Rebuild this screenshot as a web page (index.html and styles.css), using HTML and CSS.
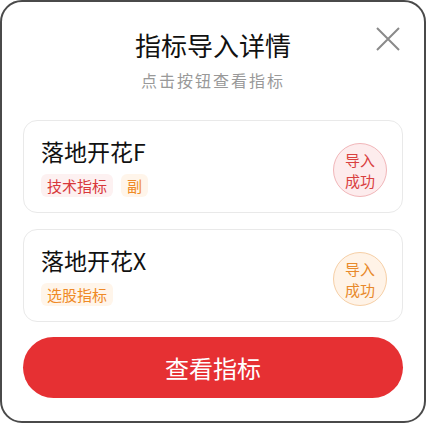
FILE: index.html
```html
<!DOCTYPE html>
<html lang="zh-CN">
<head>
    <meta charset="UTF-8">
    <meta name="viewport" content="width=device-width, initial-scale=1.0">
    <title>指标导入详情</title>
    <link rel="stylesheet" href="styles.css">
</head>
<body>
    <div class="sheet">
        <!-- 标题 -->
        <div class="header">
            <h1 class="title">指标导入详情</h1>
            <p class="subtitle">点击按钮查看指标</p>
            <button class="close" aria-label="关闭">
                <svg width="24" height="24" viewBox="0 0 24 24">
                    <path d="M1 1 L23 23 M23 1 L1 23" stroke="#8a8a8a" stroke-width="2" fill="none"/>
                </svg>
            </button>
        </div>

        <!-- 指标列表 -->
        <div class="list">
            <div class="card">
                <div class="info">
                    <div class="name">落地开花F</div>
                    <div class="tags">
                        <span class="tag tag-red">技术指标</span>
                        <span class="tag tag-orange">副</span>
                    </div>
                </div>
                <div class="badge badge-red">导入<br>成功</div>
            </div>

            <div class="card">
                <div class="info">
                    <div class="name">落地开花X</div>
                    <div class="tags">
                        <span class="tag tag-orange">选股指标</span>
                    </div>
                </div>
                <div class="badge badge-orange">导入<br>成功</div>
            </div>
        </div>

        <button class="btn">查看指标</button>
    </div>
</body>
</html>
```

FILE: styles.css
```css
* {
    box-sizing: border-box;
}
body {
    margin: 0;
    background: #fff;
    font-family: "Noto Sans CJK SC", "Noto Sans", sans-serif;
}
.sheet {
    width: 426px;
    height: 423px;
    border: 2px solid #4a4a4a;
    border-radius: 22px;
    background: #fff;
    padding: 25px 21px 0;
}
.header {
    position: relative;
    text-align: center;
}
.title {
    margin: 0;
    font-size: 26px;
    line-height: 36px;
    font-weight: 400;
    color: #111;
}
.subtitle {
    margin: 6px 0 0;
    font-size: 16px;
    line-height: 22px;
    letter-spacing: 2px;
    color: #999;
}
.close {
    position: absolute;
    top: 0;
    right: 3px;
    width: 24px;
    height: 24px;
    padding: 0;
    border: none;
    background: none;
    cursor: pointer;
}
.list {
    display: flex;
    flex-direction: column;
    gap: 16px;
    margin-top: 29px;
}
.card {
    display: flex;
    align-items: center;
    justify-content: space-between;
    height: 93px;
    padding: 15px 15px 15px 17px;
    border: 1px solid #e9e9e9;
    border-radius: 14px;
}
.name {
    font-size: 23px;
    line-height: 30px;
    color: #111;
}
.tags {
    display: flex;
    gap: 8px;
    margin-top: 8px;
}
.tag {
    height: 23px;
    line-height: 23px;
    padding: 0 6px;
    border-radius: 6px;
    font-size: 15px;
}
.tag-red {
    background: #fdf1f1;
    color: #d8383b;
}
.tag-orange {
    background: #fff5ea;
    color: #ef8a26;
}
.badge {
    width: 54px;
    height: 54px;
    margin-top: 6px;
    border-radius: 50%;
    display: flex;
    align-items: center;
    justify-content: center;
    text-align: center;
    font-size: 15px;
    line-height: 21px;
}
.badge-red {
    background: #fdeced;
    border: 1px solid #f1b6b9;
    color: #d9403f;
}
.badge-orange {
    background: #fff3e7;
    border: 1px solid #f6cfa6;
    color: #e8892a;
}
.btn {
    display: block;
    width: 100%;
    height: 61px;
    margin-top: 15px;
    border: none;
    border-radius: 31px;
    background: #e63033;
    color: #fff;
    font-family: inherit;
    font-size: 24px;
    cursor: pointer;
}
```
